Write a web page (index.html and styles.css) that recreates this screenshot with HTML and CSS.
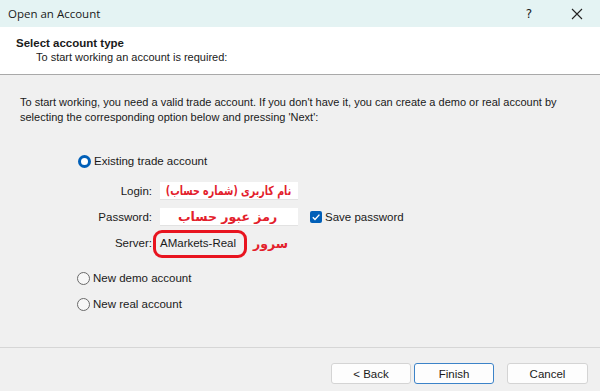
FILE: index.html
```html
<!DOCTYPE html>
<html lang="en">
<head>
    <meta charset="UTF-8">
    <meta name="viewport" content="width=device-width, initial-scale=1.0">
    <title>Open an Account</title>
    <link rel="stylesheet" href="styles.css">
</head>
<body>
    <div class="dialog">
        <div class="title-bar">
            <span class="title">Open an Account</span>
            <span class="title-btn help">?</span>
            <span class="title-btn close">
                <svg width="12" height="12" viewBox="0 0 12 12"><path d="M1 1 L11 11 M11 1 L1 11" stroke="#222" stroke-width="1.1" fill="none"/></svg>
            </span>
        </div>

        <div class="header">
            <div class="header-title">Select account type</div>
            <div class="header-sub">To start working an account is required:</div>
        </div>

        <div class="content">
            <p class="intro">To start working, you need a valid trade account. If you don't have it, you can create a demo or real account by selecting the corresponding option below and pressing 'Next':</p>

            <div class="options">
                <label class="radio-row">
                    <span class="radio checked"></span>
                    <span>Existing trade account</span>
                </label>

                <div class="fields">
                    <span class="field-label">Login:</span>
                    <span class="text-box"><span class="fa login-note">نام کاربری (شماره حساب)</span></span>
                    <span></span>

                    <span class="field-label">Password:</span>
                    <span class="text-box pass"><span class="fa">رمز عبور حساب</span></span>
                    <label class="check-row">
                        <span class="checkbox">
                            <svg width="12" height="12" viewBox="0 0 12 12"><path d="M2.8 6.2 L5 8.4 L9.4 3.6" stroke="#fff" stroke-width="1.4" fill="none"/></svg>
                        </span>
                        <span>Save password</span>
                    </label>

                    <span class="field-label">Server:</span>
                    <span class="server">
                        <span class="server-value">AMarkets-Real</span>
                        <span class="fa server-note">سرور</span>
                    </span>
                    <span></span>
                </div>

                <label class="radio-row demo">
                    <span class="radio"></span>
                    <span>New demo account</span>
                </label>
                <label class="radio-row real">
                    <span class="radio"></span>
                    <span>New real account</span>
                </label>
            </div>
        </div>

        <div class="footer">
            <button type="button" class="btn">&lt; Back</button>
            <button type="button" class="btn default">Finish</button>
            <button type="button" class="btn cancel">Cancel</button>
        </div>
    </div>
</body>
</html>
```

FILE: styles.css
```css
body {
    margin: 0;
    padding: 0;
    font-family: 'Liberation Sans', Arial, sans-serif;
    font-size: 11px;
    color: #1a1a1a;
    background-color: #f0f0f0;
}

.dialog {
    width: 600px;
    height: 391px;
    display: flex;
    flex-direction: column;
    background-color: #f0f0f0;
}

/* title bar */
.title-bar {
    height: 27px;
    display: flex;
    align-items: center;
    background-color: #e4f3f3;
}

.title {
    flex: 1;
    padding-left: 8px;
    font-family: 'Open Sans', sans-serif;
    font-size: 11.5px;
    color: #1a1a1a;
}

.title-btn {
    display: flex;
    align-items: center;
    justify-content: center;
    width: 46px;
    height: 27px;
}

.help {
    font-family: 'DejaVu Sans', sans-serif;
    font-size: 12px;
    margin-right: 2px;
}

/* header */
.header {
    height: 48px;
    background-color: #ffffff;
    border-bottom: 1px solid #a9a9a9;
    padding-top: 9px;
    box-sizing: border-box;
}

.header-title {
    padding-left: 16px;
    font-weight: bold;
    font-size: 11.5px;
    line-height: 14px;
}

.header-sub {
    padding-left: 36px;
    line-height: 15px;
}

/* main */
.content {
    flex: 1;
}

.intro {
    margin: 20px 0 0 20px;
    width: 550px;
    line-height: 15px;
}

.options {
    padding-left: 77px;
    margin-top: 28px;
}

.radio-row {
    display: flex;
    align-items: center;
    gap: 3px;
    height: 16px;
    font-size: 11.5px;
}

.radio {
    width: 11px;
    height: 11px;
    border: 1px solid #6a6a6a;
    border-radius: 50%;
    background-color: #f7f7f7;
}

.radio.checked {
    width: 7px;
    height: 7px;
    border: 3px solid #005fb8;
    background-color: #fff;
    margin-left: 1px;
}

.radio-row.demo {
    margin-top: 18px;
}

.radio-row.real {
    margin-top: 10px;
}

.fields {
    display: grid;
    grid-template-columns: 75px 138px auto;
    column-gap: 8px;
    row-gap: 8px;
    align-items: center;
    margin-top: 13px;
}

.field-label {
    text-align: right;
    font-size: 11.5px;
}

.text-box {
    height: 18px;
    background-color: #ffffff;
    border-bottom: 1px solid #e2e2e2;
    box-sizing: border-box;
    display: flex;
    align-items: center;
    justify-content: center;
    overflow: hidden;
}

.text-box.pass {
    justify-content: flex-start;
    padding-left: 18px;
}

.fa {
    direction: rtl;
    white-space: nowrap;
    font-family: 'DejaVu Sans', sans-serif;
    font-weight: bold;
    font-size: 12.5px;
    color: #e3202b;
}

.login-note {
    font-size: 12.5px;
    transform: scaleX(0.76);
}

.check-row {
    display: flex;
    align-items: center;
    gap: 3px;
    margin-left: 4px;
    font-size: 11.5px;
}

.checkbox {
    width: 12px;
    height: 12px;
    border-radius: 2px;
    background-color: #005fb8;
    display: flex;
}

.server {
    display: flex;
    align-items: center;
    height: 18px;
}

.server-value {
    position: relative;
    font-size: 11.5px;
}

/* red marker drawn over the server value */
.server-value::after {
    content: "";
    position: absolute;
    left: -7px;
    top: -7px;
    width: 88px;
    height: 22px;
    border: 3px solid #e8141f;
    border-radius: 9px;
}

.server-note {
    margin-left: 17px;
}

/* footer */
.footer {
    height: 44px;
    box-sizing: border-box;
    border-top: 1px solid #d6d6d6;
    display: flex;
    justify-content: flex-end;
    align-items: flex-start;
    padding: 15px 12px 0 0;
    gap: 3px;
}

.btn {
    width: 80px;
    height: 21px;
    background-color: #fdfdfd;
    border: 1px solid #d4d4d4;
    border-radius: 3px;
    font-family: 'Liberation Sans', Arial, sans-serif;
    font-size: 11.5px;
    color: #1a1a1a;
    padding: 0;
}

.btn.default {
    border-color: #3c83c8;
}

.btn.cancel {
    margin-left: 10px;
    width: 81px;
}
```
